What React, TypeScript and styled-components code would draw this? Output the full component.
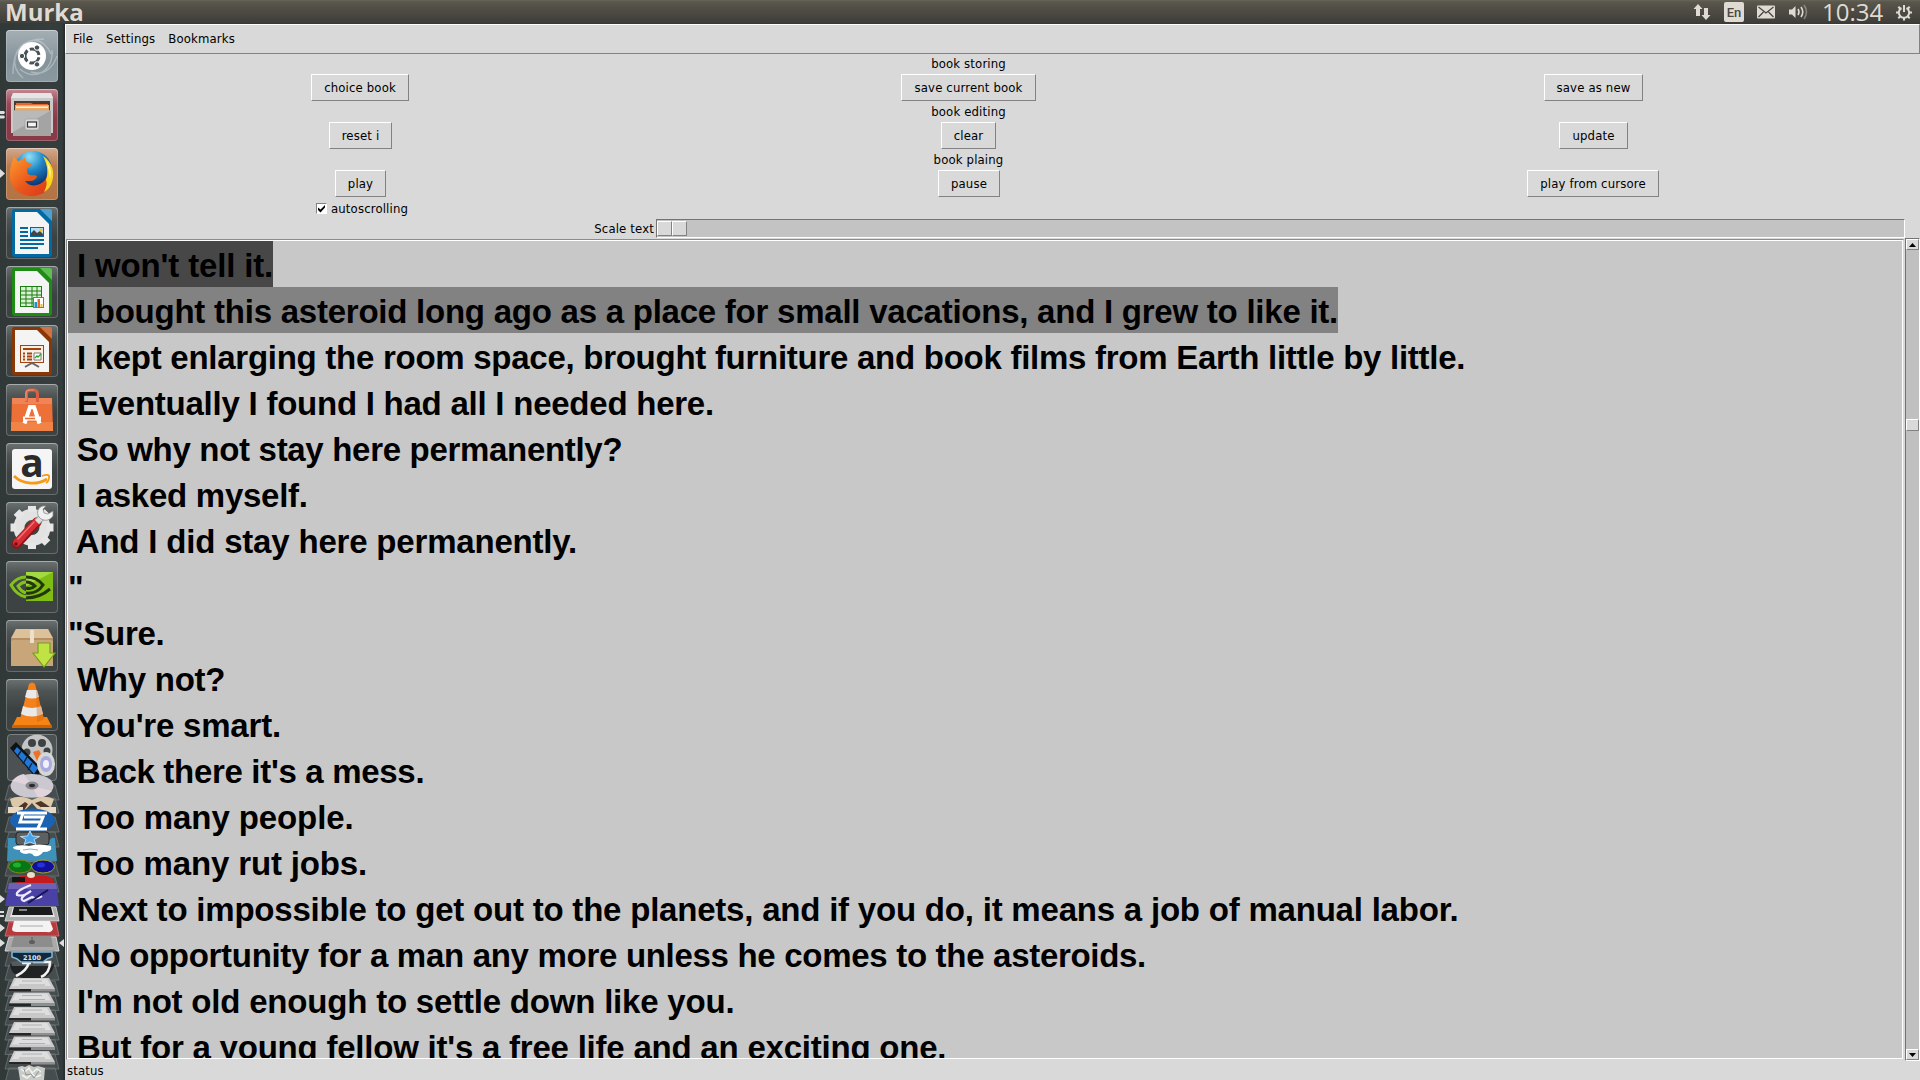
import React from 'react';
import styled, { createGlobalStyle, css } from 'styled-components';

const GlobalStyle = createGlobalStyle`
  * { box-sizing: border-box; }
  html, body { margin: 0; padding: 0; background: #d9d9d9; overflow: hidden; }
`;

const uiFont = css`
  font-family: 'DejaVu Sans Condensed', 'DejaVu Sans', sans-serif;
  font-stretch: condensed;
  font-size: 13px;
  line-height: 16px;
  letter-spacing: 0.15px;
  color: #000;
  white-space: nowrap;
`;

const raised = css`
  border: 1px solid;
  border-color: #fff #828282 #828282 #fff;
`;

const Desktop = styled.div`
  width: 1920px;
  height: 1080px;
  display: flex;
  flex-direction: column;
  overflow: hidden;
  background: #d9d9d9;
`;

const TopBar = styled.header`
  height: 24px;
  flex: none;
  display: flex;
  align-items: center;
  justify-content: space-between;
  padding: 0 8px 0 5px;
  background: linear-gradient(#67645a 0, #59564c 2px, #3e3d38 23px, #36352f 24px);
  color: #dfdbd2;
  font-family: 'Open Sans', 'Noto Sans', sans-serif;
`;

const AppTitle = styled.span`
  font-size: 24px;
  line-height: 24px;
  font-weight: 700;
`;

const Indicators = styled.div`
  display: flex;
  align-items: center;
  height: 24px;
`;

const Glyph = styled.svg<{ $gap: number }>`
  display: block;
  flex: none;
  margin-right: ${p => p.$gap}px;
`;

const LangBadge = styled.span`
  width: 20px;
  height: 20px;
  margin-right: 13px;
  border-radius: 2px;
  background: #dfdbd2;
  color: #4a4841;
  font: 500 13px/21px 'Roboto', 'Noto Sans', sans-serif;
  text-align: center;
`;

const Clock = styled.span`
  width: 60px;
  margin-right: 14px;
  font-size: 24px;
  line-height: 24px;
  white-space: nowrap;
`;

const Body = styled.div`
  flex: 1;
  min-height: 0;
  display: flex;
`;

const Launcher = styled.nav`
  width: 65px;
  flex: none;
  display: flex;
  flex-direction: column;
  padding-top: 6px;
  background: linear-gradient(90deg, #313838 0, #363d3d 50px, #343b3c 62px, #24292a 65px);
`;

const LauncherRow = styled.div`
  display: flex;
  align-items: center;
  height: 52px;
  margin-bottom: 7px;
  flex: none;
`;

const Pips = styled.svg`
  width: 6px;
  height: 52px;
  display: block;
`;

const Tile = styled.div<{ $bg: string }>`
  width: 52px;
  height: 52px;
  border-radius: 4px;
  background: ${p => p.$bg};
  box-shadow: inset 0 0 0 1px rgba(255, 255, 255, 0.22), inset 0 1px 0 rgba(255, 255, 255, 0.25);
  overflow: hidden;
`;

const Art = styled.svg`
  display: block;
`;

const Stack = styled(Art)`
  flex: none;
  margin-top: -4px;
`;

const Window = styled.main`
  flex: 1;
  min-width: 0;
  display: flex;
  flex-direction: column;
  background: #d9d9d9;
`;

const MenuBar = styled.div`
  ${raised}
  height: 30px;
  flex: none;
  display: flex;
  align-items: center;
  gap: 13px;
  padding-left: 7px;
`;

const MenuItem = styled.span`
  ${uiFont}
`;

const Controls = styled.section`
  flex: none;
  height: 184px;
  width: 1840px;
  display: grid;
  grid-template-columns: 590px 626px 624px;
  grid-template-rows: 18px 30px 18px 30px 18px 30px 20px 20px;
  justify-items: center;
  align-items: center;
`;

const Caption = styled.span`
  ${uiFont}
  grid-column: 2;
  padding: 2px 0 0 1px;
`;

const TkButton = styled.button<{ $w: number; $col: number; $shift?: number }>`
  ${uiFont}
  ${raised}
  grid-column: ${p => p.$col};
  align-self: start;
  width: ${p => p.$w}px;
  height: 27px;
  margin: 2px 0 0 ${p => p.$shift ?? p.$w % 2}px;
  padding: 0;
  border-radius: 0;
  background: #d9d9d9;
`;

const Check = styled.label`
  ${uiFont}
  grid-column: 1;
  display: flex;
  align-items: center;
  gap: 4px;
  padding: 1px 0 0 4px;
`;

const CheckBox = styled.span`
  width: 11px;
  height: 11px;
  border: 1px solid;
  border-color: #828282 #fff #fff #828282;
  background: #fff;
`;

const ScaleLabel = styled.span`
  ${uiFont}
  grid-column: 1;
  justify-self: end;
  padding: 1px 1px 0 0;
`;

const Trough = styled.div`
  grid-column: 2 / 4;
  align-self: start;
  margin-top: 1px;
  margin-left: 1px;
  width: 1249px;
  height: 19px;
  border: 1px solid;
  border-color: #747474 #fff #fff #747474;
  background: #c3c3c3;
  padding: 1px 0 0 0;
  display: flex;
`;

const Knob = styled.span`
  ${raised}
  width: 15px;
  height: 15px;
  background: #d9d9d9;
`;

const TextRow = styled.div`
  display: flex;
  height: 823px;
  flex: none;
`;

const TextFrame = styled.div`
  margin: 1px;
  width: 1838px;
  border: 1px solid;
  border-color: #8c8c8c #d9d9d9 #d9d9d9 #8c8c8c;
  display: flex;
  flex: none;
`;

const TextArea = styled.div`
  flex: 1;
  overflow: hidden;
  border: 1px solid #fff;
  background: #c8c8c8;
`;

const Line = styled.div`
  height: 46px;
`;

const Sentence = styled.span<{ $bg?: string; $ls: number }>`
  display: inline-block;
  height: 46px;
  font: bold 33px/49px 'Liberation Sans', Arial, sans-serif;
  letter-spacing: ${p => p.$ls}px;
  white-space: pre;
  color: #000;
  background: ${p => p.$bg ?? 'transparent'};
`;

const ScrollBar = styled.div`
  width: 15px;
  border: 1px solid;
  border-color: #747474 #fff #fff #747474;
  background: #c0c0c0;
  display: flex;
  flex-direction: column;
`;

const Arrow = styled.div`
  ${raised}
  height: 11px;
  margin: 0;
  background: #d9d9d9;
  display: flex;
  align-items: center;
  justify-content: center;
`;

const Space = styled.div<{ $h?: number }>`
  ${p => (p.$h ? `height: ${p.$h}px; flex: none;` : 'flex: 1;')}
`;

const Thumb = styled.div`
  ${raised}
  height: 12px;
  background: #d9d9d9;
`;

const Status = styled.footer`
  ${uiFont}
  flex: 1;
  padding: 2px 0 0 2px;
`;

const dark = 'linear-gradient(#6c7171 0, #4e5353 12px, #3c4142 30px, #3d4243 100%)';

const Doc = ({ c, light, children }: { c: string; light: string; children: React.ReactNode }) => (
  <>
    <path d="M8 2h26l12 12v33q0 3-3 3H9q-3 0-3-3V5q0-3 2-3z" fill={c} />
    <path d="M34 2h10q2 0 2 2v10z" fill={light} />
    <path d="M9 5h22l12 12v30H9z" fill="#f4f4f4" />
    {children}
  </>
);

const UbuntuArt = () => (
  <>
    <g fill="none" stroke="#d4dde0" opacity=".45" strokeWidth="1.5">
      <path d="M7 44C7 17 18 9 38 9M8 30C16 8 35 3 45 24M17 48C2 35 10 18 20 14M14 39c14 13 34 2 32-19M25 42c14 4 22-5 26-16" />
    </g>
    <circle cx="26" cy="26" r="14" fill="#fff" />
    <circle cx="26" cy="26" r="7" fill="none" stroke="#4a5357" strokeWidth="3" strokeDasharray="12.2 2.46" strokeDashoffset="-1.2" />
    <g fill="#4a5357" stroke="#fff" strokeWidth="1">
      <circle cx="16" cy="26" r="2.7" /><circle cx="31" cy="17.6" r="2.7" /><circle cx="31" cy="34.4" r="2.7" />
    </g>
  </>
);

const FilesArt = () => (
  <>
    <path d="M7 4h38l2 5v35H5V9z" fill="#c9c9c9" />
    <path d="M7 4h38l2 5H5z" fill="#e5e5e5" />
    <path d="M8 12h36v11H8z" fill="#4b3a34" />
    <path d="M10 14h15l2 1h15v8H10z" fill="#e4672c" />
    <path d="M9 16h34v6H9z" fill="#f2a65a" /><path d="M10 17.500h32V19H10z" fill="#fff3e2" />
    <path d="M7 21.500h38V47H7z" fill="#a4a4a4" /><path d="M7 21.500h38L7 43z" fill="#b9b9b9" />
    <rect x="19" y="30" width="14" height="11" rx="2" fill="#d6d6d6" stroke="#999" strokeWidth=".6" />
    <rect x="21.500" y="33" width="9" height="5" fill="#f5f5f5" stroke="#333" strokeWidth="1.2" />
  </>
);

const FirefoxArt = () => (
  <>
    <defs>
      <radialGradient id="ffb" cx=".4" cy=".15" r=".8"><stop offset="0" stopColor="#8fe0f5" /><stop offset=".45" stopColor="#2289c8" /><stop offset="1" stopColor="#0a2c6b" /></radialGradient>
      <linearGradient id="ffo" x1="0" y1="0" x2="1" y2="1"><stop offset="0" stopColor="#ff9a2e" /><stop offset=".5" stopColor="#ea5a1b" /><stop offset="1" stopColor="#d8321a" /></linearGradient>
    </defs>
    <circle cx="27" cy="22" r="19" fill="url(#ffb)" />
    <path d="M8 9c2 2 3 3 4 4 3-1 5-1 7-4 0 4 3 6 7 7-1 2-3 4-5 4 0 4 0 6 3 7s6-1 7 2c-3 5-8 4-12 4 5 7 15 5 20-1 4-5 3-13 0-20 8 7 9 16 6 24-3 7-10 12-19 12C13 48 3 39 4 26 4 18 6 14 8 9z" fill="url(#ffo)" />
    <path d="M37 8c10 6 12 18 9 26-1 4-4 8-8 10 3-6 3-9 2-12 3-8 1-16-3-24z" fill="#ffd21c" />
    <path d="M40 12c5 6 6 13 4 19-1-7-2-13-4-19z" fill="#fff29a" />
  </>
);

const WriterArt = () => (
  <Doc c="#0369a3" light="#4f9fd0">
    <g stroke="#0369a3" strokeWidth="2"><path d="M14 21h8M14 25h8M14 29h8M14 33h24M14 37h24M14 41h18" /></g>
    <rect x="24.500" y="20.500" width="13" height="9" fill="#b6def4" stroke="#0369a3" />
    <path d="M25 29v-3l3-3 3 3 3-2 3 3v2z" fill="#444" /><circle cx="35" cy="23" r="1.500" fill="#f5c21b" />
  </Doc>
);

const CalcArt = () => (
  <Doc c="#1c8c12" light="#5cc04e">
    <rect x="14.500" y="20.500" width="21" height="20" fill="#d9f2d3" stroke="#1c7d13" />
    <path d="M15 25h21M15 29h21M15 33h21M15 37h21M20 20v21M26 20v21M31 20v21" stroke="#1c7d13" />
    <rect x="27.500" y="31.500" width="10" height="10" fill="#fff" stroke="#777" />
    <path d="M28.500 36h2.500v5h-2.500z" fill="#1d8fce" /><path d="M31.500 33h2.500v8h-2.500z" fill="#e56a25" /><path d="M34.500 38h2v3h-2z" fill="#f4c020" />
  </Doc>
);

const ImpressArt = () => (
  <Doc c="#8a3708" light="#cf7441">
    <rect x="14.500" y="20.500" width="23" height="17" fill="#fdeee3" stroke="#a04312" />
    <path d="M17 24h18" stroke="#a04312" strokeWidth="2" />
    <path d="M17 28.500h2M17 31.500h2M17 34.500h2M21 28.500h5M21 31.500h5M21 34.500h5" stroke="#a04312" strokeWidth="1.800" />
    <path d="M28 28h7v7h-7z" fill="#fff" stroke="#777" /><path d="M29 33l2-2 1 1 3-3" stroke="#29a329" fill="none" strokeWidth="1.300" />
    <path d="M26 38v1M19 42l7-4 7 4" stroke="#666" strokeWidth="2" fill="none" />
  </Doc>
);

const BagArt = () => (
  <>
    <path d="M6 14h40l1 33H5z" fill="#ee7039" /><path d="M6 14h40v6H6z" fill="#f08456" /><path d="M5 38h42v9H5z" fill="#f28347" />
    <path d="M20.500 18V10q0-4 4-4h3q4 0 4 4v8" fill="none" stroke="#d9603f" strokeWidth="3" />
    <path d="M20 17V9q0-3 4-3h4" fill="none" stroke="#ef9474" strokeWidth="1.200" />
    <path d="M18.500 39.500 24 23h4l5.500 16.500M17 34.500h18" stroke="#fff" strokeWidth="4" fill="none" />
    <path d="M19 34.500h10" stroke="#ee6b32" strokeWidth="1.500" />
  </>
);

const AmazonArt = () => (
  <>
    <rect x="6" y="6" width="40" height="40" rx="3" fill="#f5f5f5" />
    <text x="26" y="34" textAnchor="middle" fontFamily="Open Sans, sans-serif" fontWeight="700" fontSize="39" fill="#2a2a2a">a</text>
    <path d="M8 33c9 9 24 9 33 3" stroke="#f79a16" strokeWidth="2.800" fill="none" /><path d="M36 33c5-2 8-1 7 1 0 2-1 5-3 6" stroke="#f79a16" strokeWidth="1.800" fill="none" />
  </>
);

const SettingsArt = () => (
  <>
    <circle cx="26" cy="25.500" r="13" fill="none" stroke="#e2e2e2" strokeWidth="11" />
    <g stroke="#e6e6e6" strokeWidth="8"><path d="M26 4v6M26 41v6M4.500 25.500h6M41 25.500h6.500M10.500 10l5 5M36.500 36l5 5M10.500 41l5-5M36.500 15l5-5" /></g>
    <path d="M10.500 42 31 20" stroke="#8f1318" strokeWidth="9.500" strokeLinecap="round" />
    <path d="M10.500 41 30.500 19.500" stroke="#d62c33" strokeWidth="7" strokeLinecap="round" />
    <path d="m12 37 16-17" stroke="#ef7075" strokeWidth="1.500" strokeLinecap="round" />
    <path d="m31 20 7-7" stroke="#a5a5a5" strokeWidth="7" /><path d="m31 20 7-7" stroke="#dedede" strokeWidth="5" />
    <path d="M37 4c-5 1-7 7-4 11s10 5 14-1l0-5-5 3-4-1-1-4 3-3z" fill="#f0f0f0" stroke="#8d8d8d" strokeWidth=".8" />
    <circle cx="10" cy="42" r="1.800" fill="#701014" />
  </>
);

const NvidiaArt = () => (
  <>
    <rect x="20" y="11" width="27" height="29" fill="#7fbd12" /><path d="M20 11h27L20 25z" fill="#a3da42" />
    <g fill="none" strokeWidth="3">
      <path d="M20 16C12 16 8 20 5 24c4 7 9 11 15 12" stroke="#82c21b" />
      <path d="M20 21c-4 0-6 2-8 4 2 4 5 6 8 7" stroke="#82c21b" />
      <path d="M20 16c9 0 14 4 17 8-4 6-10 9-17 8M20 21c5 0 7 2 9 4-3 3-6 3-9 2" stroke="#23370d" />
      <path d="M20 37c10 0 17-3 24-9" stroke="#23370d" />
    </g>
  </>
);

const BoxArt = () => (
  <>
    <path d="M10 9h32l5 12v25H5V21z" fill="#c8a679" /><path d="M10 9h32l5 9H5z" fill="#dcc19b" /><path d="M5 18h42v2H5z" fill="#b58f62" />
    <path d="M24 10h4v13h-4z" fill="#ede0c9" />
    <path d="M32 23h12v10h5L38 47 27 33h5z" fill="#c0e245" stroke="#75a018" strokeWidth="1.200" />
  </>
);

const Cone = () => (
  <>
    <path d="M11 38h30l5 10H6z" fill="#f58413" /><path d="M6 46h40v3H6z" fill="#cf6100" />
    <path d="M23 5q3-3 6 0l9 35q-12 6-24 0z" fill="#f5811b" />
    <path d="M21 11h10l2 7q-7 3-14 0zM17 27q9 4 18 0l2 8q-11 5-22 0z" fill="#e9e9e9" />
    <path d="M30 6l8 34q-3 2-7 3z" fill="#c85d05" opacity=".35" />
  </>
);

const tiles: { bg: string; art: React.ReactNode; pip?: 'two' | 'one' }[] = [
  { bg: 'linear-gradient(#a4afb4, #84929a 60%, #8b999f)', art: <UbuntuArt /> },
  { bg: 'linear-gradient(#c58a96 0, #9b4a59 14px, #8a3947 60%)', art: <FilesArt />, pip: 'two' },
  { bg: 'linear-gradient(#d3a98c 0, #b97c50 18px, #b37342)', art: <FirefoxArt />, pip: 'one' },
  { bg: dark, art: <WriterArt /> },
  { bg: dark, art: <CalcArt /> },
  { bg: dark, art: <ImpressArt /> },
  { bg: dark, art: <BagArt /> },
  { bg: dark, art: <AmazonArt /> },
  { bg: dark, art: <SettingsArt /> },
  { bg: dark, art: <NvidiaArt /> },
  { bg: dark, art: <BoxArt /> },
  { bg: dark, art: <Cone /> },
];

/* Outline of a tile folded back at the bottom of the launcher. */
const Fold = ({ y }: { y: number }) => (
  <path d={`M9 ${y}h46l4 15H5z`} fill="rgba(120,128,130,.25)" stroke="#6d7475" strokeWidth=".8" />
);

const Disk = ({ y }: { y: number }) => (
  <g>
    <Fold y={y} />
    <path d={`M14 ${y - 3}h35l6 11H9z`} fill="#c9c9c9" />
    <path d={`M16 ${y - 2}h31l4 7H12z`} fill="#dedede" />
    <path d={`M9 ${y + 8}h46v2.500H9z`} fill="#8f8f8f" /><path d={`M9 ${y + 8}h22v2.500H9z`} fill="#262626" />
    <path d={`M22 ${y}h20M19 ${y + 4}h26`} stroke="#a6a6a6" strokeWidth=".8" />
  </g>
);

const FoldedStack = () => (
  <Stack width="65" height="346" viewBox="0 734 65 346">
    <rect x="7.500" y="734.500" width="49" height="46" rx="3" fill="#4c5253" stroke="#7b8081" />
    <circle cx="37" cy="750" r="15.500" fill="#c4c4c4" />
    <g fill="#3d4243"><circle cx="32" cy="743" r="4" /><circle cx="42" cy="743" r="4" /><circle cx="27" cy="752" r="3.500" /><circle cx="47" cy="751" r="3.500" /></g>
    <path d="m16 742 26 27-6 9-26-30z" fill="#111" /><path d="m17 747 21 21-4 6-20-23z" fill="#1e78db" />
    <path d="m21 751-4 6M27 757l-4 7M32 763l-4 7" stroke="#10253c" strokeWidth="1.500" />
    <path d="M33 752l6-2 3 6-5 5z" fill="#ef7028" />
    <ellipse cx="46" cy="764" rx="9" ry="12" fill="#d6d6d6" /><ellipse cx="46" cy="764" rx="6" ry="8" fill="#aaaade" /><ellipse cx="46" cy="764" rx="3" ry="4" fill="#f0f0ff" />
    <Fold y={785} />
    <ellipse cx="32" cy="786" rx="21.500" ry="12" fill="#cbc8cf" /><path d="M32 786 12 781q5-6 12-7zM32 786l20 5q-5 6-14 7z" fill="#e2d4dd" />
    <ellipse cx="32" cy="785.500" rx="6.500" ry="4" fill="#8b8790" /><ellipse cx="32" cy="785.500" rx="3" ry="1.800" fill="#292b2d" />
    <Fold y={798} />
    <path d="M10 799q11-5 22 1 11-6 22-1l-3 8-12 4-7-8-9 9-11-6z" fill="#ddc8aa" />
    <path d="m13 811 12-9 3 2-5 8M35 803l11 8 7-2-12-8" fill="#4c3525" />
    <path d="M8 807h15v6H8zM41 807h15v6H41z" fill="#e6d8c2" />
    <Fold y={817} />
    <ellipse cx="32.500" cy="820.500" rx="22.500" ry="12" fill="#1b62b2" />
    <path d="M17 813h30M23 813l-3 9h21l2-5H24M41 822l-3 6M16 829h31" stroke="#fff" strokeWidth="3" fill="none" />
    <Fold y={832} />
    <path d="M8 838h8q4 5 16 3 12 4 20-3h3l2 23q-25 2-50 0z" fill="#3e91b8" />
    <rect x="16" y="832" width="33" height="13" rx="3" fill="#5d6061" stroke="#24282a" />
    <path d="m30 831 2.500 5 7 .5-5.500 3 2 5-6-2.500-6 2.500 2-5-5.500-3 7-.5z" fill="#45a4ed" stroke="#d5edff" strokeWidth=".8" />
    <path d="M13 847q7-3 16-1 9-3 22 0 2 6-8 6-3 5-9 4-2-4-8-2-7-1-6-4-7 0-7-3z" fill="#fff" /><path d="M23 850q7-2 15 0" stroke="#8ab5c7" fill="none" />
    <Fold y={861} />
    <ellipse cx="20" cy="866.500" rx="11.500" ry="6.500" fill="#087516" stroke="#86881b" /><ellipse cx="43" cy="866.500" rx="11.500" ry="6.500" fill="#101198" stroke="#a5a325" />
    <ellipse cx="17" cy="865" rx="4" ry="2.500" fill="#21b02d" /><ellipse cx="41" cy="865" rx="4" ry="2.500" fill="#2532d8" />
    <Fold y={877} />
    <path d="M15 879q7-5 12-3l5-3 5 3q9-2 16 3v5H17z" fill="#c51b1f" /><path d="M12 877h13v5H12z" fill="#151515" /><ellipse cx="31" cy="875" rx="4" ry="3" fill="#e6e0c5" />
    <path d="M9 883h47l3 23H5z" fill="#4a41a6" /><path d="M9 883h47l1 6H8z" fill="#6e60b2" />
    <path d="M31 885q-16 6-14 10 7 2 14-4-14 8-7 10l8-4q4 3 10-1" stroke="#eee9ff" strokeWidth="2.200" fill="none" /><path d="m28 903 20-13" stroke="#151452" strokeWidth="2" />
    <path d="M9 907h47l3 14H5z" fill="#adadad" stroke="#d0d0d0" /><path d="M13 907h39l3 10H10z" fill="#e5e5e5" /><path d="M14 907h37l2 8H12z" fill="#191a1b" /><path d="M19 910h8" stroke="#eee" />
    <path d="M9 922h47l3 14H5z" fill="#b63b3e" stroke="#d26667" /><path d="M14 921h36l3 8q-2 4-6 3H17q-5 0-5-3z" fill="#f3f3f3" /><path d="M20 926h23" stroke="#aaa" />
    <path d="M9 937h47l3 14H5z" fill="#aaa" stroke="#d4d4d4" /><path d="M14 936h37l2 11H11z" fill="#8d8d8d" /><ellipse cx="32" cy="942" rx="3" ry="2" fill="#5d5d5d" /><path d="M32 940v-3" stroke="#5d5d5d" />
    <Fold y={951} />
    <Fold y={965} />
    <path d="M10 964q22-6 44 0 0 7-7 12-15 7-30 0-7-5-7-12z" fill="#202223" /><path d="M11 962q21-5 42 0l-1 4H12z" fill="#565a5b" />
    <path d="M29 962q-2 9-13 14M33 962h17q0 11-9 15M22 963h9" stroke="#f2f2f2" strokeWidth="2.600" fill="none" />
    <path d="M12 952h40v5q-5 1-9 5H21q-4-4-9-5z" fill="#10283d" stroke="#83b5d3" strokeWidth="1.500" />
    <text x="32" y="960" textAnchor="middle" fontFamily="DejaVu Sans, sans-serif" fontWeight="700" fontSize="6.500" fill="#d7e6ef">2100</text>
    {[981, 995.5, 1010, 1025, 1039.5, 1054].map(y => <Disk key={y} y={y} />)}
    <Fold y={1068} />
    <path d="M18 1067l4-1 3 1 4-2 5 2 4-1 7 2-1 12H20z" fill="#c9cbc8" />
    <path d="m21 1069 4 3 4-4 3 5 5-4 4 3M22 1075l5 3 5-4 4 3 5-2" stroke="#f2f2ef" strokeWidth="1.500" fill="none" /><path d="m24 1069 2 6 5-1 3 4 5-7" stroke="#8e938f" fill="none" />
    <g fill="#dedede">
      <path d="M0 895l5 4-5 4zM0 911h4v2H0zM0 915h4v2H0zM0 924l5 4-5 4zM0 939l5 4-5 4zM64 939l-5 4 5 4z" />
    </g>
  </Stack>
);

const sentences: { t: string; bg?: string; ls: number }[] = [
  { t: " I won't tell it.", bg: '#474747', ls: -0.15 },
  { t: ' I bought this asteroid long ago as a place for small vacations, and I grew to like it.', bg: '#828282', ls: -0.24 },
  { t: ' I kept enlarging the room space, brought furniture and book films from Earth little by little.', ls: -0.27 },
  { t: ' Eventually I found I had all I needed here.', ls: -0.24 },
  { t: ' So why not stay here permanently?', ls: -0.31 },
  { t: ' I asked myself.', ls: -0.27 },
  { t: ' And I did stay here permanently.', ls: -0.19 },
  { t: '"', ls: 0 },
  { t: '"Sure.', ls: -0.3 },
  { t: ' Why not?', ls: -0.25 },
  { t: " You're smart.", ls: -0.2 },
  { t: " Back there it's a mess.", ls: -0.31 },
  { t: ' Too many people.', ls: -0.1 },
  { t: ' Too many rut jobs.', ls: -0.15 },
  { t: ' Next to impossible to get out to the planets, and if you do, it means a job of manual labor.', ls: -0.21 },
  { t: ' No opportunity for a man any more unless he comes to the asteroids.', ls: -0.3 },
  { t: " I'm not old enough to settle down like you.", ls: -0.2 },
  { t: " But for a young fellow it's a free life and an exciting one.", ls: -0.22 },
];

export default function App() {
  return (
    <Desktop>
      <GlobalStyle />
      <TopBar>
        <AppTitle>Murka</AppTitle>
        <Indicators>
          <Glyph $gap={13} width="18" height="18" viewBox="0 0 18 18" fill="#dfdbd2">
            <path d="M5 1 0.500 6H3v7h4V6h2.500zM13 17l4.500-5H15V5h-4v7H8.500z" />
          </Glyph>
          <LangBadge>En</LangBadge>
          <Glyph $gap={13} width="18" height="14" viewBox="0 0 18 14">
            <rect y=".5" width="18" height="13" rx="1" fill="#dfdbd2" />
            <path d="m1.500 2 7.500 6 7.500-6M1.500 12l5-5M16.500 12l-5-5" stroke="#45433d" fill="none" strokeWidth="1.200" />
          </Glyph>
          <Glyph $gap={14} width="20" height="18" viewBox="0 0 20 18">
            <path d="M1 6.500h3L7.500 3v12L4 11.500H1z" fill="#dfdbd2" />
            <g fill="none" strokeWidth="1.600" stroke="#dfdbd2"><path d="M10 6q2 3 0 6M13 4q3.500 5 0 10" /><path d="M16 2q5 7 0 14" opacity=".4" /></g>
          </Glyph>
          <Clock>10:34</Clock>
          <Glyph $gap={0} width="16" height="17" viewBox="0 0 16 17">
            <g fill="none" stroke="#dfdbd2">
              <path d="M5.500 4a5.200 5.200 0 1 0 5 0" strokeWidth="2" /><path d="M8 1v7" strokeWidth="2" />
              <path d="M0 8.500h2.500M13.500 8.500H16M8 14v2.500M2.300 14.200l2-2M13.700 14.200l-2-2M2.300 2.800l2 2M13.700 2.800l-2 2" strokeWidth="2" />
            </g>
          </Glyph>
        </Indicators>
      </TopBar>
      <Body>
        <Launcher>
          {tiles.map((tile, i) => (
            <LauncherRow key={i}>
              <Pips viewBox="0 0 6 52" fill="#dedede">
                {tile.pip === 'two' && <path d="M0 22h4l1 1.500-1 1.500H0zM0 26.500h4l1 1.500-1 1.500H0z" />}
                {tile.pip === 'one' && <path d="M0 21l5 4.500L0 30z" />}
              </Pips>
              <Tile $bg={tile.bg}><Art width="52" height="52" viewBox="0 0 52 52">{tile.art}</Art></Tile>
            </LauncherRow>
          ))}
          <FoldedStack />
        </Launcher>
        <Window>
          <MenuBar>
            <MenuItem>File</MenuItem><MenuItem>Settings</MenuItem><MenuItem>Bookmarks</MenuItem>
          </MenuBar>
          <Controls>
            <Caption>book storing</Caption>
            <TkButton $w={98} $col={1}>choice book</TkButton>
            <TkButton $w={135} $col={2}>save current book</TkButton>
            <TkButton $w={99} $col={3}>save as new</TkButton>
            <Caption>book editing</Caption>
            <TkButton $w={63} $col={1}>reset i</TkButton>
            <TkButton $w={55} $col={2}>clear</TkButton>
            <TkButton $w={69} $col={3}>update</TkButton>
            <Caption>book plaing</Caption>
            <TkButton $w={51} $col={1}>play</TkButton>
            <TkButton $w={62} $col={2} $shift={2}>pause</TkButton>
            <TkButton $w={132} $col={3}>play from cursore</TkButton>
            <Check>
              <CheckBox><Art width="9" height="9" viewBox="0 0 9 9"><path d="M1 3.500v2.500l2.500 2.500L8 3.500V1L3.500 5.500z" fill="#000" /></Art></CheckBox>
              autoscrolling
            </Check>
            <ScaleLabel>Scale text</ScaleLabel>
            <Trough><Knob /><Knob /></Trough>
          </Controls>
          <TextRow>
            <TextFrame>
              <TextArea>
                {sentences.map((s, i) => (
                  <Line key={i}><Sentence $bg={s.bg} $ls={s.ls}>{s.t}</Sentence></Line>
                ))}
              </TextArea>
            </TextFrame>
            <ScrollBar>
              <Arrow><Art width="7" height="4" viewBox="0 0 7 4"><path d="M0 4 3.500 0 7 4z" /></Art></Arrow>
              <Space $h={169} />
              <Thumb />
              <Space />
              <Arrow><Art width="7" height="4" viewBox="0 0 7 4"><path d="M0 0h7L3.500 4z" /></Art></Arrow>
            </ScrollBar>
          </TextRow>
          <Status>status</Status>
        </Window>
      </Body>
    </Desktop>
  );
}
